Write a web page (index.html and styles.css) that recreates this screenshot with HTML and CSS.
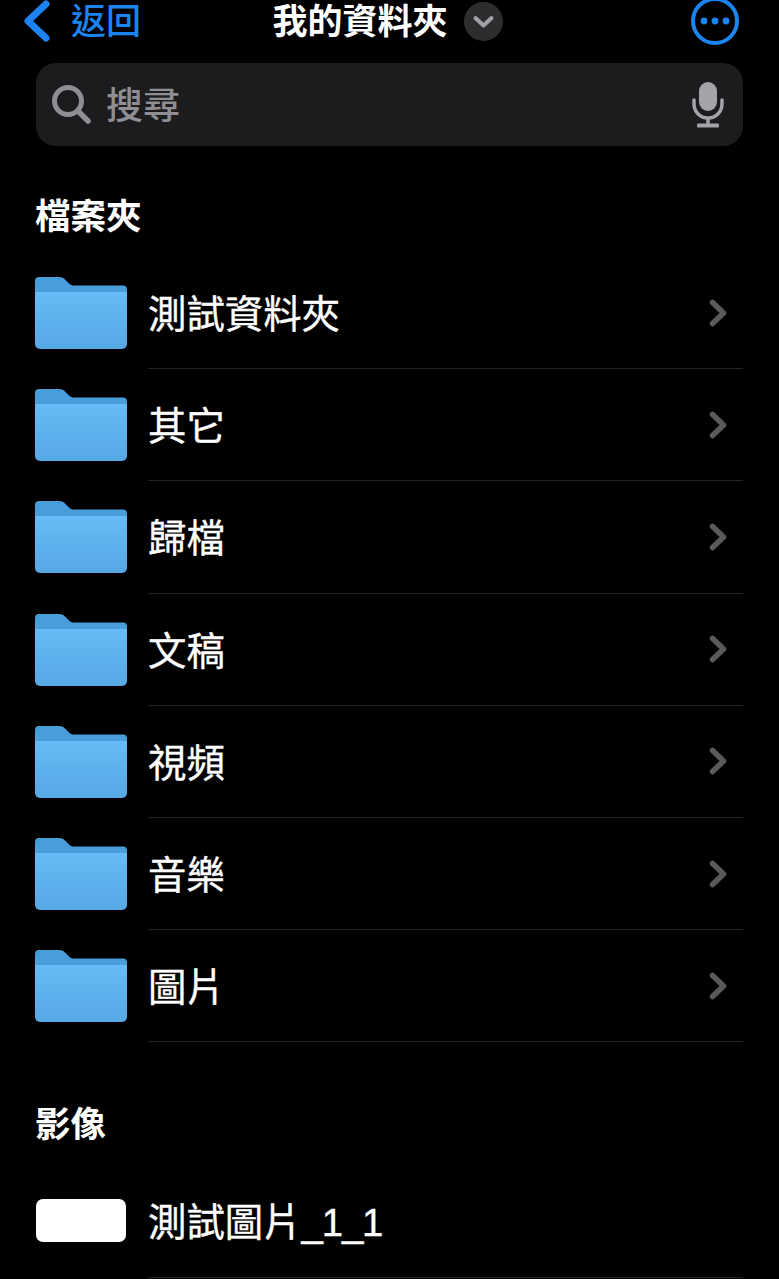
FILE: index.html
```html
<!DOCTYPE html>
<html lang="zh-Hant">
<head>
  <meta charset="UTF-8">
  <meta name="viewport" content="width=device-width, initial-scale=1.0">
  <title>我的資料夾</title>
  <link rel="stylesheet" href="styles.css">
</head>
<body>
  <svg class="defs" width="0" height="0" aria-hidden="true">
    <defs>
      <linearGradient id="folderfront" x1="0" y1="0" x2="0" y2="1">
        <stop offset="0" stop-color="#67baf3"/>
        <stop offset="1" stop-color="#57a8e6"/>
      </linearGradient>
      <symbol id="folder" viewBox="0 0 92 72">
        <path d="M0 4a4 4 0 0 1 4-4h20c3 0 5 1 6 2.500l4 4c1.500 1.500 3 2 5 2h49a4 4 0 0 1 4 4v20H0z" fill="#4a9ddb"/>
        <path d="M0 15h92v52a5 5 0 0 1-5 5H5a5 5 0 0 1-5-5z" fill="url(#folderfront)"/>
      </symbol>
      <symbol id="chevron" viewBox="0 0 18 28">
        <path d="M3.500 3.500 14.500 14 3.500 24.500" fill="none" stroke="#5a5a5c" stroke-width="5.500" stroke-linecap="round" stroke-linejoin="round"/>
      </symbol>
    </defs>
  </svg>

  <div class="nav">
    <div class="navleft">
      <svg class="backicon" viewBox="0 0 27 42"><path d="M23 4 5 21l18 17" fill="none" stroke="#1c84f0" stroke-width="7" stroke-linecap="round" stroke-linejoin="round"/></svg>
      <span class="backtext">返回</span>
    </div>
    <div class="navtitle">
      <span>我的資料夾</span>
      <span class="titlemenu">
        <svg viewBox="0 0 39 39"><path d="M11.500 16 19.500 23.500 27.500 16" fill="none" stroke="#a2a2a6" stroke-width="4" stroke-linecap="round" stroke-linejoin="round"/></svg>
      </span>
    </div>
    <div class="navright">
      <svg class="moreicon" viewBox="0 0 48 48">
        <circle cx="24" cy="24" r="22" fill="none" stroke="#1c84f0" stroke-width="4"/>
        <circle cx="13" cy="24" r="3.400" fill="#1c84f0"/>
        <circle cx="24" cy="24" r="3.400" fill="#1c84f0"/>
        <circle cx="35" cy="24" r="3.400" fill="#1c84f0"/>
      </svg>
    </div>
  </div>

  <div class="search">
    <svg class="searchicon" viewBox="0 0 41 41"><circle cx="17" cy="17" r="13.500" fill="none" stroke="#8e8e93" stroke-width="5"/><path d="M27 27 37 37" stroke="#8e8e93" stroke-width="5.500" stroke-linecap="round"/></svg>
    <span class="searchtext">搜尋</span>
    <svg class="micicon" viewBox="0 0 32 46">
      <rect x="7" y="0" width="18" height="29" rx="9" fill="#a3a3a8"/>
      <path d="M2 18v4a14 14 0 0 0 28 0v-4" fill="none" stroke="#a3a3a8" stroke-width="3.500" stroke-linecap="round"/>
      <path d="M16 36v7" stroke="#a3a3a8" stroke-width="3.500"/>
      <rect x="5" y="41.500" width="22" height="4" rx="1" fill="#a3a3a8"/>
    </svg>
  </div>

  <h2 class="sectiontitle">檔案夾</h2>
  <div class="list">
    <div class="row"><svg class="folder"><use href="#folder"/></svg><div class="rowbody"><span class="rowname">測試資料夾</span><svg class="chevron"><use href="#chevron"/></svg></div></div>
    <div class="row"><svg class="folder"><use href="#folder"/></svg><div class="rowbody"><span class="rowname">其它</span><svg class="chevron"><use href="#chevron"/></svg></div></div>
    <div class="row"><svg class="folder"><use href="#folder"/></svg><div class="rowbody"><span class="rowname">歸檔</span><svg class="chevron"><use href="#chevron"/></svg></div></div>
    <div class="row"><svg class="folder"><use href="#folder"/></svg><div class="rowbody"><span class="rowname">文稿</span><svg class="chevron"><use href="#chevron"/></svg></div></div>
    <div class="row"><svg class="folder"><use href="#folder"/></svg><div class="rowbody"><span class="rowname">視頻</span><svg class="chevron"><use href="#chevron"/></svg></div></div>
    <div class="row"><svg class="folder"><use href="#folder"/></svg><div class="rowbody"><span class="rowname">音樂</span><svg class="chevron"><use href="#chevron"/></svg></div></div>
    <div class="row"><svg class="folder"><use href="#folder"/></svg><div class="rowbody"><span class="rowname">圖片</span><svg class="chevron"><use href="#chevron"/></svg></div></div>
  </div>

  <h2 class="sectiontitle second">影像</h2>
  <div class="list">
    <div class="row imagerow"><div class="thumb"></div><div class="rowbody"><span class="rowname">測試圖片<span class="suffix">_1_1</span></span></div></div>
  </div>
</body>
</html>
```

FILE: styles.css
```css
html, body {
  height: 100%;
  overflow: hidden;
}

body {
  margin: 0;
  background-color: #000;
  color: #fff;
  font-family: "Liberation Sans", "Noto Sans CJK TC", sans-serif;
}

.defs {
  display: block;
  height: 0;
}

.nav {
  display: grid;
  grid-template-columns: 1fr auto 1fr;
  align-items: center;
  height: 40px;
  padding: 0 40px 0 36px;
}

.navleft {
  display: flex;
  align-items: center;
  gap: 21px;
  margin-left: -13px;
}

.backicon {
  width: 27px;
  height: 42px;
}

.backtext {
  color: #1c84f0;
  font-size: 35px;
  font-weight: 500;
  line-height: 41px;
}

.navtitle {
  display: flex;
  align-items: center;
  gap: 16px;
  font-size: 35px;
  font-weight: bold;
  line-height: 41px;
}

.titlemenu {
  display: flex;
  width: 39px;
  height: 39px;
  border-radius: 50%;
  background-color: #2d2d2f;
}

.navright {
  display: flex;
  justify-content: flex-end;
  height: 40px;
  align-items: center;
}

.moreicon {
  flex: none;
  width: 48px;
  height: 48px;
}

.search {
  display: flex;
  align-items: center;
  height: 83px;
  margin: 23px 36px 0;
  padding: 0 19px 0 15px;
  border-radius: 20px;
  background-color: #1c1c1e;
}

.searchicon {
  width: 41px;
  height: 41px;
}

.searchtext {
  flex: 1;
  margin-left: 14px;
  padding-top: 4px;
  color: #8e8e93;
  font-size: 37px;
  font-weight: 500;
  line-height: 44px;
}

.micicon {
  width: 32px;
  height: 46px;
}

.sectiontitle {
  margin: 50px 36px 0 35px;
  font-size: 35.5px;
  font-weight: bold;
  line-height: 42px;
}

.sectiontitle.second {
  margin-top: 62px;
}

.list {
  margin-top: 19px;
  padding: 0 36px 0 35px;
}

.row {
  display: flex;
  align-items: center;
  gap: 21px;
}

.folder {
  flex: none;
  width: 92px;
  height: 72px;
}

.thumb {
  flex: none;
  width: 90px;
  height: 43px;
  margin: 0 1px 2px;
  border-radius: 7px;
  background-color: #fff;
}

.rowbody {
  flex: 1;
  display: flex;
  align-items: center;
  justify-content: space-between;
  box-sizing: border-box;
  height: 112.2px;
  padding-right: 16px;
  border-bottom: 1px solid #232325;
}

.rowname {
  padding-top: 5px;
  font-size: 38.4px;
  line-height: 46px;
  -webkit-text-stroke: 0.35px #fff;
}

.suffix {
  letter-spacing: -1.2px;
}

.chevron {
  width: 18px;
  height: 28px;
}
```
